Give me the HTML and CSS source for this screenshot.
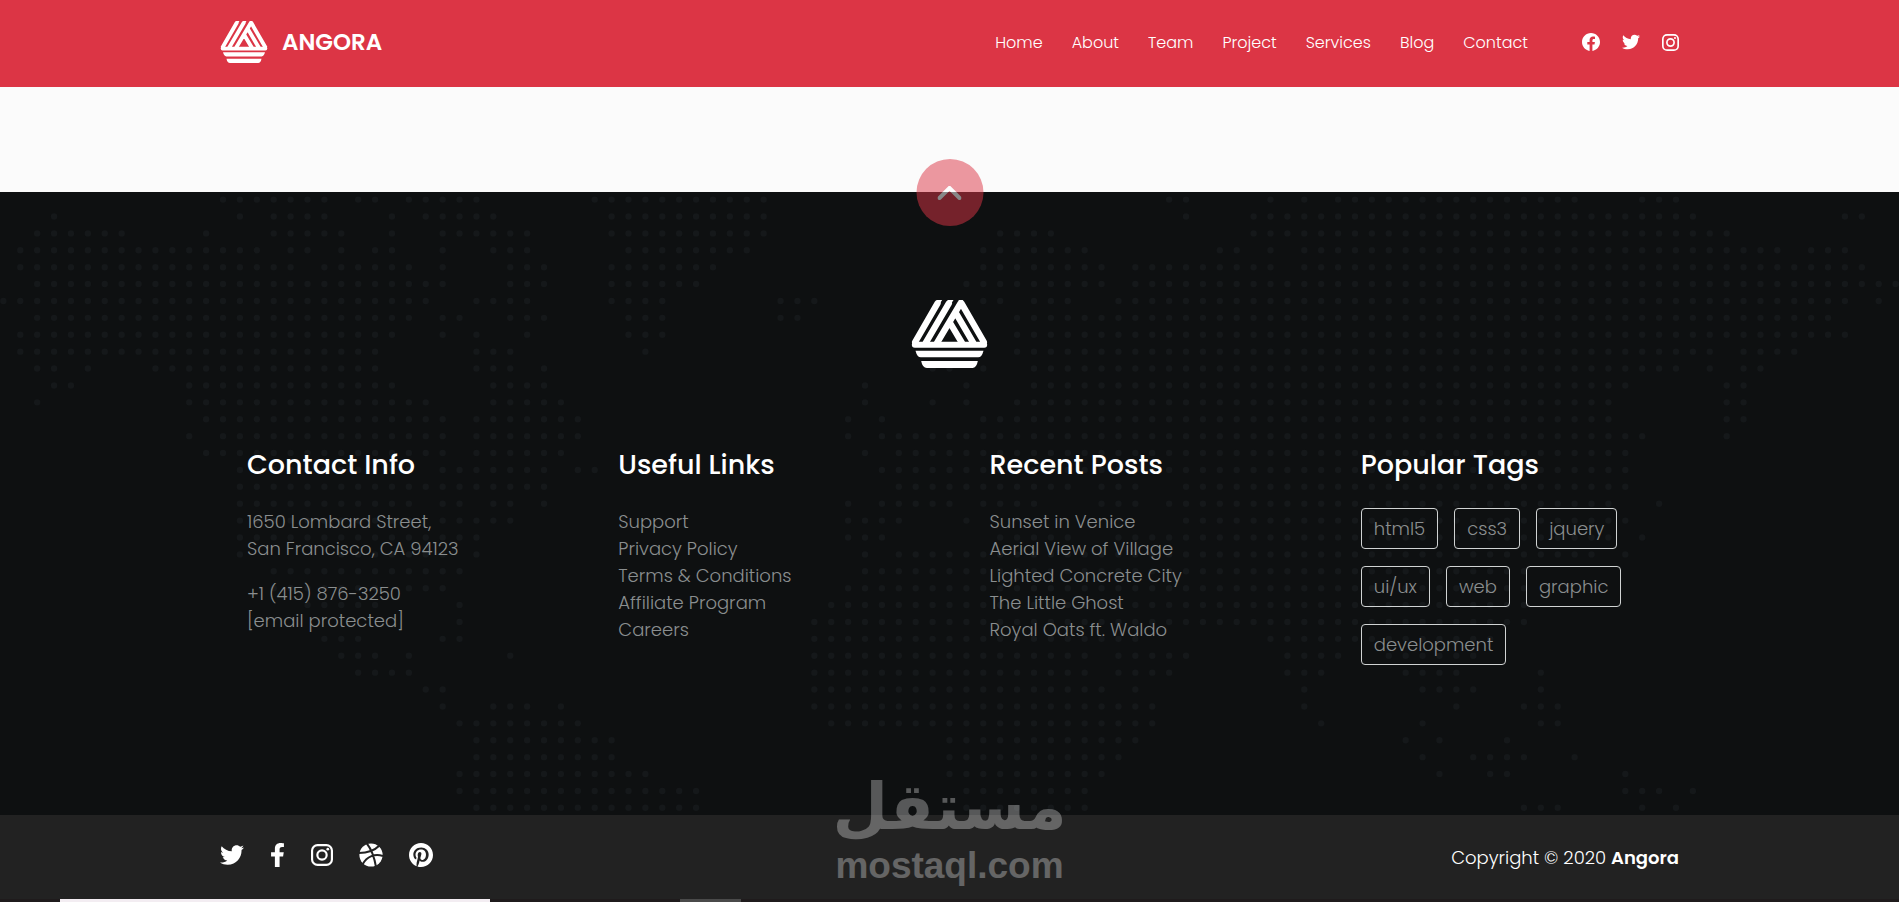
FILE: index.html
```html
<!DOCTYPE html>
<html lang="en">
<head>
    <meta charset="UTF-8">
    <title>Angora</title>
    <meta name="viewport" content="width=device-width, initial-scale=1.0">
    <link rel="stylesheet" href="styles.css">
</head>
<body>
    <!-- shared shapes -->
    <svg class="sprite" aria-hidden="true">
        <symbol id="logo" viewBox="95 480 228 204">
            <g fill="none" stroke="currentColor" stroke-width="19" stroke-linecap="round" stroke-linejoin="round">
                <path d="M173 490L106 606M207 490L138 608M242 490L172 608M245 490L312 606M227 517L280 608M209 546L246 608"/>
                <path d="M105 614H313" stroke-width="18"/>
            </g>
            <path d="M170 480h17l-10 16zM204 480h17l-10 16zM236 480h14l-8 14z" fill="currentColor"/>
            <path d="M107 632H311Q306 652 295 652H123Q112 652 107 632zM124 663H294Q290 684 278 684H141Q128 684 124 663z" fill="currentColor"/>
        </symbol>
        <symbol id="twitter" viewBox="0 0 512 512">
            <path fill="currentColor" d="M459.37 151.716c.325 4.548.325 9.097.325 13.645 0 138.72-105.583 298.558-298.558 298.558-59.452 0-114.68-17.219-161.137-47.106 8.447.974 16.568 1.299 25.34 1.299 49.055 0 94.213-16.568 130.274-44.832-46.132-.975-84.792-31.188-98.112-72.772 6.498.974 12.995 1.624 19.818 1.624 9.421 0 18.843-1.3 27.614-3.573-48.081-9.747-84.143-51.98-84.143-102.985v-1.299c13.969 7.797 30.214 12.67 47.431 13.319-28.264-18.843-46.781-51.005-46.781-87.391 0-19.492 5.197-37.36 14.294-52.954 51.655 63.675 129.3 105.258 216.365 109.807-1.624-7.797-2.599-15.918-2.599-24.04 0-57.828 46.782-104.934 104.934-104.934 30.213 0 57.502 12.67 76.67 33.137 23.715-4.548 46.456-13.32 66.599-25.34-7.798 24.366-24.366 44.833-46.132 57.827 21.117-2.273 41.584-8.122 60.426-16.243-14.292 20.791-32.161 39.308-52.628 54.253z"/>
        </symbol>
        <symbol id="instagram" viewBox="0 0 448 448">
            <rect x="22" y="22" width="404" height="404" rx="112" fill="none" stroke="currentColor" stroke-width="44"/>
            <circle cx="224" cy="224" r="95" fill="none" stroke="currentColor" stroke-width="44"/>
            <circle cx="342" cy="106" r="28" fill="currentColor"/>
        </symbol>
    </svg>

    <header class="header">
        <div class="container header-inner">
            <a href="#" class="brand">
                <svg class="brand-logo" aria-hidden="true"><use href="#logo"/></svg>
                <span>ANGORA</span>
            </a>
            <nav class="nav">
                <a href="#home">Home</a>
                <a href="#about">About</a>
                <a href="#team">Team</a>
                <a href="#project">Project</a>
                <a href="#services">Services</a>
                <a href="#blog">Blog</a>
                <a href="#contact">Contact</a>
            </nav>
            <div class="header-social">
                <a href="#" aria-label="Facebook"><svg class="icon" viewBox="8 8 496 496"><path fill="currentColor" d="M504 256C504 119 393 8 256 8S8 119 8 256c0 123.78 90.69 226.38 209.25 245V327.69h-63V256h63v-54.64c0-62.15 37-96.48 93.67-96.48 27.14 0 55.52 4.84 55.52 4.84v61h-31.28c-30.8 0-40.41 19.12-40.41 38.73V256h68.78l-11 71.69h-57.78V501C413.31 482.38 504 379.78 504 256z"/></svg></a>
                <a href="#" aria-label="Twitter"><svg class="icon"><use href="#twitter"/></svg></a>
                <a href="#" aria-label="Instagram"><svg class="icon icon-insta"><use href="#instagram"/></svg></a>
            </div>
        </div>
    </header>

    <main class="content"></main>

    <footer class="footer">
        <svg class="map" viewBox="0 0 112.4 37" preserveAspectRatio="xMinYMin slice" aria-hidden="true">
            <path id="map-dots"/>
        </svg>
        <button type="button" class="to-top" aria-label="Back to top">
            <svg viewBox="0 0 24 14"><path d="M2 12L12 2L22 12"/></svg>
        </button>
        <svg class="footer-logo" aria-hidden="true"><use href="#logo"/></svg>
        <div class="columns">
            <section class="column">
                <h2>Contact Info</h2>
                <p>1650 Lombard Street,<br>San Francisco, CA 94123</p>
                <p>+1 (415) 876-3250<br><a href="#">[email protected]</a></p>
            </section>
            <section class="column">
                <h2>Useful Links</h2>
                <ul>
                    <li><a href="#">Support</a></li>
                    <li><a href="#">Privacy Policy</a></li>
                    <li><a href="#">Terms &amp; Conditions</a></li>
                    <li><a href="#">Affiliate Program</a></li>
                    <li><a href="#">Careers</a></li>
                </ul>
            </section>
            <section class="column">
                <h2>Recent Posts</h2>
                <ul>
                    <li><a href="#">Sunset in Venice</a></li>
                    <li><a href="#">Aerial View of Village</a></li>
                    <li><a href="#">Lighted Concrete City</a></li>
                    <li><a href="#">The Little Ghost</a></li>
                    <li><a href="#">Royal Oats ft. Waldo</a></li>
                </ul>
            </section>
            <section class="column">
                <h2>Popular Tags</h2>
                <div class="tags">
                    <a href="#">html5</a>
                    <a href="#">css3</a>
                    <a href="#">jquery</a>
                    <a href="#">ui/ux</a>
                    <a href="#">web</a>
                    <a href="#">graphic</a>
                    <a href="#">development</a>
                </div>
            </section>
        </div>
    </footer>

    <div class="copyright">
        <div class="container copyright-inner">
            <div class="footer-social">
                <a href="#" aria-label="Twitter"><svg class="icon"><use href="#twitter"/></svg></a>
                <a href="#" aria-label="Facebook"><svg class="icon icon-fb" viewBox="0 0 320 512"><path fill="currentColor" d="M279.14 288l14.22-92.66h-88.91v-60.13c0-25.35 12.42-50.06 52.24-50.06h40.42V6.26S260.43 0 225.36 0c-73.22 0-121.08 44.38-121.08 124.72v70.62H22.89V288h81.39v224h100.17V288z"/></svg></a>
                <a href="#" aria-label="Instagram"><svg class="icon icon-insta"><use href="#instagram"/></svg></a>
                <a href="#" aria-label="Dribbble"><svg class="icon" viewBox="0 0 24 24"><circle cx="12" cy="12" r="11.6" fill="currentColor"/><path class="ball-lines" d="M7.5 0C12 5.500 15 12 17 24M0 10C8 10 15 8 20.5 2.5M3.5 21.5C8 13 16 10.5 24 13"/></svg></a>
                <a href="#" aria-label="Pinterest"><svg class="icon" viewBox="0 8 496 496"><path fill="currentColor" d="M496 256c0 137-111 248-248 248-25.6 0-50.2-3.9-73.4-11.1 10.1-16.5 25.2-43.5 30.8-65 3-11.6 15.4-59 15.4-59 8.1 15.4 31.7 28.5 56.8 28.5 74.8 0 128.7-68.8 128.7-154.3 0-81.9-66.9-143.2-152.9-143.2-107 0-163.9 71.8-163.9 150.1 0 36.4 19.4 81.7 50.3 96.1 4.7 2.2 7.2 1.2 8.3-3.3.8-3.4 5-20.3 6.9-28.1.6-2.5.3-4.7-1.7-7.1-10.1-12.5-18.3-35.3-18.3-56.6 0-54.7 41.4-107.6 112-107.6 60.9 0 103.6 41.5 103.6 100.9 0 67.1-33.9 113.6-78 113.6-24.3 0-42.6-20.1-36.7-44.8 7-29.5 20.5-61.3 20.5-82.6 0-19-10.2-34.9-31.4-34.9-24.9 0-44.9 25.7-44.9 60.2 0 22 7.4 36.8 7.4 36.8s-24.5 103.8-29 123.2c-5 21.4-3 51.6-.9 71.2C65.4 450.9 0 361.1 0 256 0 119 111 8 248 8s248 111 248 248z"/></svg></a>
            </div>
            <p>Copyright © 2020 <strong>Angora</strong></p>
        </div>
        <div class="watermark">
            <span class="watermark-ar" lang="ar">مستقل</span>
            <span class="watermark-en">mostaql.com</span>
        </div>
    </div>
    <div class="bottom-strip"><span class="strip-light"></span><span class="strip-grey"></span></div>

    <script src="script.js"></script>
</body>
</html>
```
FILE: styles.css
```css
* { box-sizing: border-box; }
body {
    margin: 0;
    background-color: #fbfbfb;
    font-family: Poppins, Inter, "Noto Sans", sans-serif;
    font-size: 18px;
    font-weight: 300;
    line-height: 27px;
    color: #fff;
}
a { color: inherit; text-decoration: none; }
h2, p, ul { margin: 0; padding: 0; }
ul { list-style: none; }
.sprite { display: none; }
.container {
    max-width: 1485px;
    margin: 0 auto;
    padding: 0 13px;
}

/* header */
.header { background-color: #dc3545; }
.header-inner {
    display: flex;
    align-items: center;
    height: 87px;
    padding-bottom: 3px;
}
.brand {
    display: flex;
    align-items: center;
    gap: 14px;
    margin-right: auto;
    font-size: 23px;
    font-weight: 600;
}
.brand-logo { width: 48px; height: 42px; }
.nav {
    display: flex;
    gap: 29px;
    font-size: 16px;
    font-weight: 300;
}
.header-social {
    display: flex;
    align-items: center;
    gap: 22px;
    margin-left: 54px;
}
.header-social a, .footer-social a { display: flex; }
.header-social .icon { width: 18px; height: 18px; }
.header-social .icon-insta { width: 17px; height: 17px; }
.content { height: 105px; }

/* footer */
.footer {
    position: relative;
    padding: 108px 0 150px;
    background-color: #0e1011;
}
.map {
    position: absolute;
    top: 0;
    left: 0;
    width: 100%;
    height: 100%;
}
#map-dots {
    fill: none;
    stroke: #15181a;
    stroke-width: 0.38;
    stroke-linecap: round;
    stroke-dasharray: 0 1;
}
.to-top {
    position: absolute;
    top: -33px;
    left: 50%;
    display: flex;
    align-items: center;
    justify-content: center;
    width: 67px;
    height: 67px;
    padding: 0;
    border: none;
    border-radius: 50%;
    background-color: #dc3545;
    opacity: 0.5;
    transform: translateX(-50%);
    cursor: pointer;
}
.to-top svg { width: 24px; height: 14px; }
.to-top path {
    fill: none;
    stroke: #fff;
    stroke-width: 4;
    stroke-linecap: round;
}
.footer-logo {
    position: relative;
    display: block;
    width: 77px;
    height: 68px;
    margin: 0 auto 80px;
}
.columns {
    position: relative;
    display: grid;
    grid-template-columns: repeat(4, 1fr);
    max-width: 1485px;
    margin: 0 auto;
    color: #8a8e8f;
}
.column { padding: 0 40px; }
.column h2 {
    margin-bottom: 26px;
    font-size: 27px;
    font-weight: 500;
    line-height: 34px;
    color: #fff;
}
.column p + p { margin-top: 18px; }
.tags {
    display: flex;
    flex-wrap: wrap;
    gap: 17px 16px;
}
.tags a {
    padding: 6px 12px;
    border: 1px solid #d0d3d3;
    border-radius: 4px;
}

/* copyright bar */
.copyright {
    position: relative;
    background-color: #222;
}
.copyright-inner {
    display: flex;
    align-items: center;
    justify-content: space-between;
    height: 84px;
}
.copyright strong { font-weight: 600; }
.footer-social {
    display: flex;
    align-items: center;
    gap: 26px;
    padding-bottom: 4px;
}
.footer-social .icon { width: 24px; height: 24px; }
.footer-social .icon-fb { width: 15px; }
.footer-social .icon-insta { width: 22px; height: 22px; }
.ball-lines {
    fill: none;
    stroke: #222;
    stroke-width: 2;
}
.watermark {
    position: absolute;
    bottom: 12px;
    left: 50%;
    display: flex;
    flex-direction: column;
    align-items: center;
    color: #fff;
    opacity: 0.3;
    transform: translateX(-50%);
    pointer-events: none;
}
.watermark-ar {
    font-family: "DejaVu Sans", sans-serif;
    font-size: 64px;
    font-weight: 700;
    line-height: 75px;
}
.watermark-en {
    font-family: "Liberation Sans", sans-serif;
    font-size: 37px;
    font-weight: 700;
    line-height: 42px;
}
.bottom-strip {
    display: flex;
    height: 3px;
    padding-left: 60px;
    background-color: #1f1b1c;
}
.strip-light { width: 430px; background-color: #f3edf2; }
.strip-grey { width: 61px; margin-left: 190px; background-color: #4a4a4a; }
```
FILE: script.js
```javascript
// world map, one string per row, each item is a run of dots "from-to"
const rows = [
    "13-19 21-22 24-28 35-45 69-70 75 77 79-93 97-99",
    "3 14 16-19 23 25-29 36-45 70 74-100 109-110",
    "2-7 12 16-20 23 26-31 36-45 59-62 74-102",
    "1-15 17-18 20 22-23 26 29-31 37-44 58-64 72-73 75 77-105 107-109",
    "1-17 19-24 26 30-32 36-42 58-65 67-75 77-110",
    "2-26 30-32 36-41 57-65 67-112",
    "0-25 28-31 36-39 46-48 58-59 61-63 66-109 111",
    "2-24 26-27 30-32 37-39 46-47 60-108",
    "1-23 26 28 31 37-39 60-109",
    "1-22 28-30 38 60-101 103-106",
    "2-3 5 9-22 28-30 32 55-56 58 61-99 101 103-104",
    "3-4 11-23 29-32 51 57 61-96 102-103",
    "2 11-25 29-33 51 55 57 60-95 102-103",
    "12-26 28-34 50 52 58-95 102-103",
    "11 13-26 28-34 50 52-97 102",
    "12-26 28-33 51 53-96",
    "14-24 26-32 34-35 52-96",
    "14-32 53-63 65-67 70-96",
    "14-24 26-27 29-30 32 50 52-56 58-61 65-67 69-95 98",
    "14-24 26-30 50-53 57 70-96",
    "14-28 50-52 59-63 66-95 97",
    "14 20-26 28 51 53-94 96",
    "16-27 51-90",
    "16-22 24-26 50-90",
    "18-22 27 49-90",
    "27 48-90",
    "19-21 26-27 48-67 75-88",
    "20-22 24 30 48-64 66-70 76-79 82-87",
    "21-24 48-64 66-69 76-78 83-86 91",
    "25-26 48-65 67 77 84-87 91",
    "26 29-31 33 48-68 77 86 90-92",
    "27-34 49-68 78 84 91-92",
    "28-36 56-67 83 85 89",
    "28-36 56-66 84 87-90 93",
    "27-38 56-65 85 88-89 96",
    "27-41 57-64 96-98 100",
    "28-41 57-64 90-92 97 99"
];

let d = "";
rows.forEach((row, y) => {
    row.split(" ").forEach(run => {
        const [from, to = from] = run.split("-").map(Number);
        d += `M${from + 0.2} ${y + 0.45}h${to - from + 0.1}`;
    });
});
document.getElementById("map-dots").setAttribute("d", d);
```
